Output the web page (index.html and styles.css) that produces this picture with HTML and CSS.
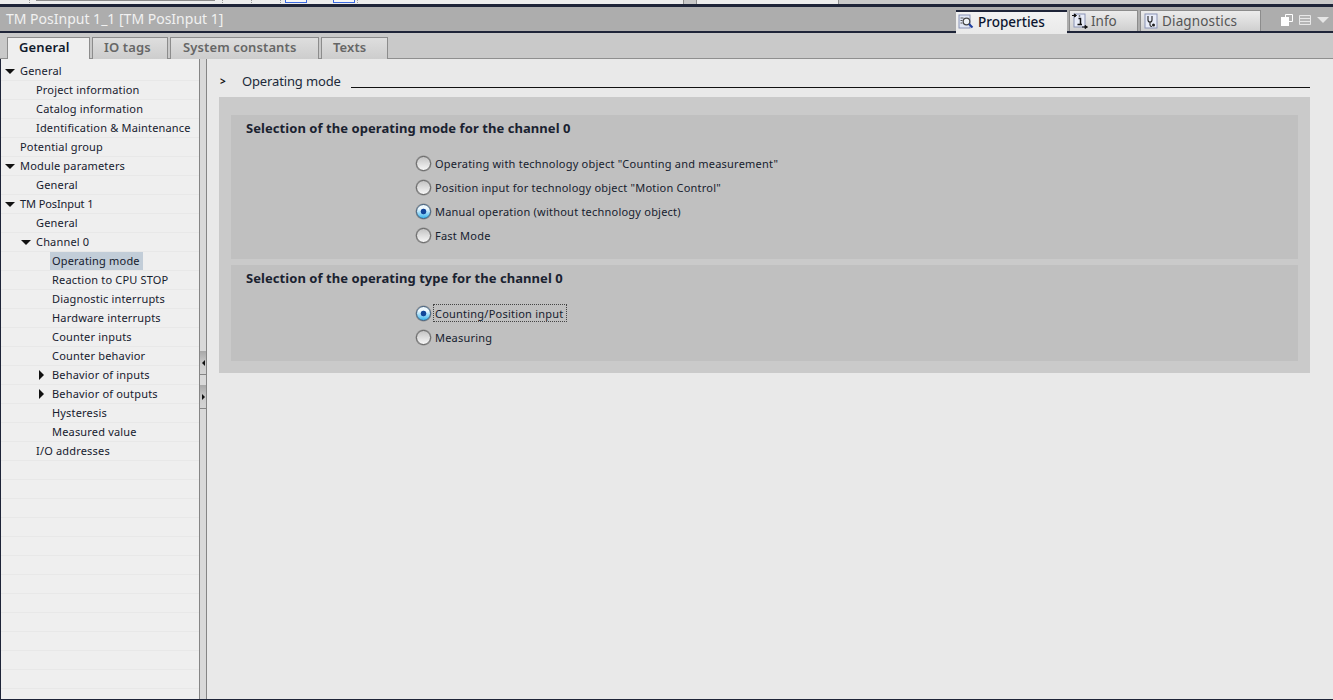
FILE: index.html
```html
<!DOCTYPE html>
<html lang="en">
<head>
<meta charset="utf-8">
<title>TM PosInput 1_1</title>
<link rel="stylesheet" href="styles.css">
</head>
<body>
<div class="topstrip">
  <span class="ts w29"></span><span class="ts-dot"></span>
  <span class="ts w6"></span><span class="ts-bar"></span>
  <span class="ts w7"></span><span class="ts-dot"></span>
  <span class="ts w28"></span><span class="ts-dot"></span>
  <span class="ts w28"></span><span class="ts-dot"></span>
  <span class="ts w4"></span><span class="ts-blue"></span>
  <span class="ts w26"></span><span class="ts-blue"></span>
  <span class="ts w2"></span><span class="ts-dot"></span>
  <span class="ts w325"></span>
  <span class="ts-scroll"></span>
  <span class="ts w140"></span>
  <span class="ts-end"></span>
</div>
<header class="titlebar">
  <div class="title">TM PosInput 1_1 [TM PosInput 1]</div>
  <div class="insp-tabs">
    <div class="insp-tab active w-prop">
      <svg class="ic" viewBox="0 0 16 16"><rect x="1" y="1" width="11" height="13" fill="#dfe6f5" stroke="#8a93b5"/><path d="M2.500 4h3M2.500 6.500h2M2.500 9h2" stroke="#555"/><circle cx="8.500" cy="7.500" r="3.300" fill="#eef3f8" stroke="#444" stroke-width="1.200"/><path d="M11 10l3.500 3.500" stroke="#1f3fa0" stroke-width="2"/></svg>
      <span>Properties</span>
    </div>
    <div class="insp-tab w-info">
      <svg class="ic" viewBox="0 0 16 16"><rect x="2" y="1" width="11" height="13" fill="#e8ecf8" stroke="#8a93b5"/><path d="M6.500 5.500h2v6M5.500 11.500h4.500M7.500 2.600v1" stroke="#111" stroke-width="1.500" fill="none"/><path d="M0 2.500h4M2.500 1l2 1.500-2 1.500z M10 14h4.500M13 12.500l2.500 1.500-2.500 1.500z" stroke="#111" fill="#111"/></svg>
      <span>Info</span>
    </div>
    <div class="insp-tab w-diag">
      <svg class="ic" viewBox="0 0 16 16"><rect x="2" y="1" width="12" height="14" fill="#e8ecf8" stroke="#8a93b5"/><path d="M5 3v4q0 2 2 2t2-2V3M7 9v3q0 1.500 2 1.500" stroke="#222" stroke-width="1.100" fill="none"/><circle cx="10.500" cy="12" r="1.500" fill="#222"/></svg>
      <span>Diagnostics</span>
    </div>
  </div>
  <div class="win-icons">
    <svg class="wi" viewBox="0 0 12 12"><path d="M4.500.500h7v7h-7z" fill="#b0b0b0" stroke="#fff"/><rect x="0" y="3" width="8" height="9" fill="#fff"/></svg>
    <svg class="wi" viewBox="0 0 12 12"><path d="M.500 1.500h11v9H.500zM.500 4.500h11M.500 7.500h11" fill="#b5b5b5" stroke="#e8e8e8"/></svg>
    <span class="wi-arrow"></span>
  </div>
</header>
<nav class="subtabs">
  <div class="subtab active t-gen">General</div>
  <div class="subtab t-io">IO tags</div>
  <div class="subtab t-sys">System constants</div>
  <div class="subtab t-txt">Texts</div>
</nav>
<main class="body">
  <aside class="tree">
    <div class="row l0"><i class="down"></i><span>General</span></div>
    <div class="row l1"><span>Project information</span></div>
    <div class="row l1"><span>Catalog information</span></div>
    <div class="row l1"><span>Identification &amp; Maintenance</span></div>
    <div class="row l0"><span>Potential group</span></div>
    <div class="row l0"><i class="down"></i><span>Module parameters</span></div>
    <div class="row l1"><span>General</span></div>
    <div class="row l0"><i class="down"></i><span class="tight">TM PosInput 1</span></div>
    <div class="row l1"><span>General</span></div>
    <div class="row l1"><i class="down"></i><span>Channel 0</span></div>
    <div class="row l2"><span class="sel">Operating mode</span></div>
    <div class="row l2"><span>Reaction to CPU STOP</span></div>
    <div class="row l2"><span>Diagnostic interrupts</span></div>
    <div class="row l2"><span>Hardware interrupts</span></div>
    <div class="row l2"><span>Counter inputs</span></div>
    <div class="row l2"><span>Counter behavior</span></div>
    <div class="row l2"><i class="right"></i><span>Behavior of inputs</span></div>
    <div class="row l2"><i class="right"></i><span>Behavior of outputs</span></div>
    <div class="row l2"><span>Hysteresis</span></div>
    <div class="row l2"><span>Measured value</span></div>
    <div class="row l1"><span>I/O addresses</span></div>
    <div class="row"></div><div class="row"></div><div class="row"></div><div class="row"></div>
    <div class="row"></div><div class="row"></div><div class="row"></div><div class="row"></div>
    <div class="row"></div><div class="row"></div><div class="row"></div><div class="row"></div>
  </aside>
  <div class="splitter">
    <div class="sp-btn first"><i class="sp-left"></i></div>
    <div class="sp-btn second"><i class="sp-right"></i></div>
  </div>
  <section class="content">
    <div class="heading">
      <span class="chev">&gt;</span>
      <span class="h-text">Operating mode</span>
      <span class="h-line"></span>
    </div>
    <div class="outer">
      <div class="group g1">
        <h2>Selection of the operating mode for the channel 0</h2>
        <div class="radios">
          <div class="radio"><i class="dot"></i><span>Operating with technology object "Counting and measurement"</span></div>
          <div class="radio"><i class="dot"></i><span>Position input for technology object "Motion Control"</span></div>
          <div class="radio"><i class="dot on"></i><span>Manual operation (without technology object)</span></div>
          <div class="radio"><i class="dot"></i><span>Fast Mode</span></div>
        </div>
      </div>
      <div class="group g2">
        <h2>Selection of the operating type for the channel 0</h2>
        <div class="radios">
          <div class="radio"><i class="dot on"></i><span class="focus">Counting/Position input</span></div>
          <div class="radio"><i class="dot"></i><span>Measuring</span></div>
        </div>
      </div>
    </div>
  </section>
</main>
</body>
</html>
```
FILE: styles.css
```css
* { box-sizing: border-box; }
html, body { margin: 0; height: 700px; overflow: hidden; }
body {
  width: 1333px;
  background: #e9e9e9;
  font-family: "Noto Sans", "Open Sans", sans-serif;
  font-size: 11px;
  color: #16202e;
  display: flex;
  flex-direction: column;
  border-bottom: 1px solid #1e2438;
}

/* top strip */
.topstrip { height: 4px; background: #ededed; display: flex; flex: none; }
.ts { display: block; height: 4px; flex: none; }
.w29 { width: 29px; } .w6 { width: 6px; } .w7 { width: 7px; } .w28 { width: 28px; } .w4 { width: 4px; }
.w26 { width: 26px; } .w2 { width: 2px; } .w325 { width: 325px; } .w140 { width: 141px; }
.ts-dot { width: 1px; height: 4px; flex: none; background: repeating-linear-gradient(#999 0 1px, transparent 1px 2px); }
.ts-bar { width: 179px; height: 1px; flex: none; background: #8c8c8c; }
.ts-blue { width: 22px; height: 3px; flex: none; border: 1px solid #3c6be0; border-top: 0; background: #f7f7f7; }
.ts-scroll { width: 14px; height: 4px; flex: none; background: #c8c8c8; border: 1px solid #8f8f8f; border-width: 0 1px; }
.ts-end { flex: 1; height: 4px; background: #c9c9c9; border-left: 1px solid #8f8f8f; }

/* title bar */
.titlebar {
  height: 29px;
  flex: none;
  background: #adadad;
  border-top: 3px solid #1e2438;
  border-bottom: 2px solid #1e2438;
  display: flex;
  align-items: flex-start;
}
.title {
  width: 956px;
  padding-left: 6px;
  color: #f1f1f1;
  font-size: 14px;
  line-height: 24px;
  flex: none;
}
.insp-tabs { display: flex; gap: 2px; flex: none; padding-top: 3px; width: 305px; }
.insp-tab {
  height: 21px;
  display: flex;
  align-items: center;
  gap: 3px;
  padding-left: 2px;
  color: #555;
  font-size: 13.5px;
  background: linear-gradient(#ececec, #cfcfcf);
  border: 1px solid #8c8c8c;
  border-bottom: 0;
  flex: none;
}
.insp-tab.active {
  height: 24px;
  gap: 4px;
  padding-bottom: 3px;
  color: #0c1530;
  font-weight: 500;
  background: linear-gradient(#f2f2f2, #e9e9e9);
  border: 0;
  border-top: 2px solid #1e2438;
  position: relative;
  z-index: 2;
}
.w-prop { width: 111px; } .w-info { width: 69px; } .w-diag { width: 121px; letter-spacing: .15px; }
.ic { width: 16px; height: 16px; flex: none; }
.win-icons { display: flex; align-items: center; gap: 6px; padding: 7px 0 0 20px; flex: none; }
.wi { width: 12px; height: 12px; flex: none; }
.wi-arrow { width: 0; height: 0; border: 6.5px solid transparent; border-top: 6px solid #e6e6e6; border-bottom: 0; }

/* sub tabs */
.subtabs {
  height: 26px;
  flex: none;
  background: #c9c9c9;
  border-bottom: 1px solid #8f8f8f;
  display: flex;
  gap: 2px;
  padding: 4px 0 0 7px;
}
.subtab {
  height: 22px;
  border: 1px solid #8c8c8c;
  border-bottom: 0;
  padding-left: 11px;
  font-size: 13px;
  line-height: 18px;
  font-weight: 600;
  letter-spacing: .12px;
  color: #666;
  background: linear-gradient(#dedede, #cdcdcd);
  flex: none;
}
.subtab.active { color: #111a2c; background: #efefef; }
.t-gen { width: 83px; } .t-io { width: 76px; } .t-sys { width: 149px; padding-left: 12px; } .t-txt { width: 67px; }

/* main */
.body { flex: 1; min-height: 0; display: flex; }
.tree {
  width: 199px;
  flex: none;
  background: #efefef;
  border-left: 1px solid #1e2438;
  padding-top: 3px;
  overflow: hidden;
  letter-spacing: .18px;
}
.row {
  height: 19px;
  line-height: 18px;
  border-bottom: 1px solid #e8e8e8;
  display: flex;
  position: relative;
  white-space: nowrap;
}
.tight { letter-spacing: -.1px; }
.l0 { padding-left: 19px; } .l1 { padding-left: 35px; } .l2 { padding-left: 51px; }
.sel { background: #c2cdd8; margin-left: -2px; padding: 0 2px; width: 93px; height: 18px; }
.down, .right { position: absolute; width: 0; height: 0; }
.down { border: 5px solid transparent; border-top: 5px solid #111; border-bottom: 0; top: 7px; margin-left: -15px; }
.right { border: 5px solid transparent; border-left: 5px solid #111; border-right: 0; top: 4px; margin-left: -13px; }
.splitter {
  width: 8px;
  flex: none;
  background: #d9d9d9;
  border-left: 1px solid #858585;
  border-right: 1px solid #858585;
  padding-top: 292px;
}
.sp-btn { height: 24px; background: linear-gradient(#a8a8a8, #cdcdcd 60%, #d4d4d4); border-bottom: 1px solid #858585; display: flex; align-items: center; justify-content: center; }
.second { margin-top: 10px; }
.sp-left { border: 3px solid transparent; border-right: 3px solid #111; border-left: 0; }
.sp-right { border: 3px solid transparent; border-left: 3px solid #111; border-right: 0; }

/* content */
.content { flex: 1; min-width: 0; padding: 13px 23px 0 12px; }
.heading { display: flex; height: 25px; align-items: flex-start; }
.chev { width: 23px; font-size: 10px; line-height: 18px; font-weight: 700; padding-left: 1px; color: #111; flex: none; }
.h-text { font-size: 13px; letter-spacing: -.14px; color: #20293a; width: 109px; flex: none; line-height: 18px; }
.h-line { flex: 1; height: 1px; background: #111; margin-top: 15px; }
.outer { background: #cacaca; height: 276px; padding: 18px 12px 0; }
.group { background: #c0c0c0; padding-left: 15px; }
.g1 { height: 144px; margin-bottom: 6px; }
.g2 { height: 96px; }
h2 { margin: 0; font-size: 13px; font-weight: 700; line-height: 18px; padding-top: 4px; height: 36px; letter-spacing: .06px; color: #1a2230; }
.radios { padding-left: 170px; }
.radio { height: 24px; display: flex; align-items: center; gap: 4px; letter-spacing: .22px; }
.dot {
  width: 15px; height: 15px; border-radius: 50%; flex: none;
  border: 1px solid #5f5f5f;
  background: linear-gradient(#c4c4c4, #f6f6f6);
  box-shadow: 0 0 0 .5px #8a8a8a;
}
.dot.on {
  border-color: #3a5a7a;
  background: radial-gradient(circle at 50% 50%, #12469a 0 2.500px, transparent 3.200px), linear-gradient(#eef8fd 30%, #38b4ee);
}
.focus { outline: 1px dotted #444; margin-left: -1px; padding: 1px 3px 0 1px; line-height: 15px; }
```
